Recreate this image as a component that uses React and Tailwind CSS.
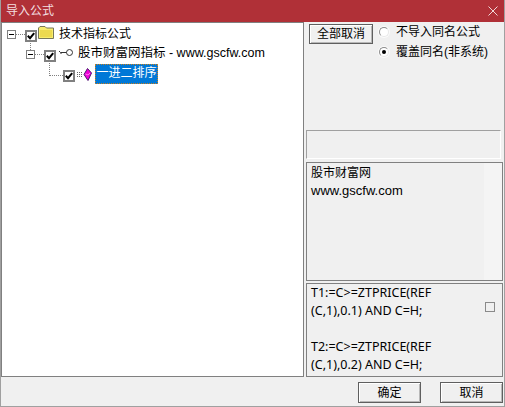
const cjk = "font-['Liberation_Sans','Noto_Sans_CJK_SC',sans-serif]"

const TreeBox = () => (
  <span className="flex w-[12px] h-[12px] mt-[6px] items-center justify-center border-2 border-[#808080] bg-white shrink-0">
    <svg width="8" height="8" viewBox="0 0 8 8">
      <path d="M0.8 3.8L3 6.2L7.2 1.2" fill="none" stroke="#000" strokeWidth="2" />
    </svg>
  </span>
)

const Minus = ({ children }) => (
  <span className="relative flex w-[9px] h-[9px] mt-[3px] items-center justify-center border border-[#808080] bg-white shrink-0">
    <span className="w-[5px] h-px bg-black" />
    {children}
  </span>
)

const Dots = () => <span className="w-[9px] h-0 mt-[3px] border-t border-dotted border-[#808080] shrink-0" />

const Folder = () => (
  <svg width="16" height="13" viewBox="0 0 16 13" className="ml-px mb-[2px] shrink-0">
    <path d="M0.5 12.5V2L2 0.5H7L8.5 2H15.5V12.5Z" fill="#f7ec6e" stroke="#77775a" />
    <path d="M2 4H14V11H2Z" fill="#ecd94f" />
  </svg>
)

const Key = () => (
  <svg width="15" height="9" viewBox="0 0 15 9" className="ml-[2px] mb-[2px] shrink-0">
    <circle cx="11.5" cy="4.5" r="3" fill="#fff" stroke="#333" />
    <path d="M8.5 4.5H2.5L1 3M3 4.5V6" stroke="#333" fill="none" />
  </svg>
)

const Gem = () => (
  <svg width="15" height="13" viewBox="0 0 15 13" className="ml-[2px] mt-[2px] shrink-0">
    <path d="M0 4.5H6M0 6.5H6M0 8.5H6" stroke="#666" strokeDasharray="1 1" />
    <path d="M10.5 0.5L14.5 5L11 12.5L7 6.5Z" fill="#f000d8" stroke="#4a1a70" />
    <path d="M8.5 6L11 7L13 5" fill="none" stroke="#ff80ee" />
  </svg>
)

const Radio = ({ on }) => (
  <span className="flex w-[10px] h-[10px] items-center justify-center rounded-full bg-white border border-[#8c8c8c] border-b-[#e8e8e8] border-r-[#e8e8e8] shadow-[0_0_0_1px_#fbfbfb] shrink-0">
    {on && <span className="w-[4px] h-[4px] rounded-full bg-black" />}
  </span>
)

const Btn = ({ children, className }) => (
  <button
    type="button"
    className={`flex items-center justify-center border border-[#5f5f5f] bg-[#f0f0f0] shadow-[inset_1px_1px_0_#fff,inset_-1px_-1px_0_#b8b8b8] text-[12px] text-black ${className}`}
  >
    {children}
  </button>
)

export default function App() {
  return (
    <div className={`w-[505px] h-[407px] flex flex-col bg-[#f0f0f0] border-x border-b border-[#a0a0a0] overflow-hidden ${cjk}`}>
      <div className="-mx-px h-[22px] flex items-center justify-between pl-[6px] pr-[7px] bg-[#b03037] text-[12px] text-[#f3dfe0] shrink-0">
        <span>导入公式</span>
        <svg width="10" height="10" viewBox="0 0 10 10"><path d="M0.5 0.5L9.5 9.5M9.5 0.5L0.5 9.5" stroke="#f0d8d8" /></svg>
      </div>
      <div className="flex gap-[2px] h-[355px] shrink-0">
        <div className="w-[303px] border border-[#808080] bg-white text-[12px] text-black shrink-0">
          <div className="flex items-center h-[20px] pl-[5px]">
            <Minus />
            <Dots />
            <TreeBox />
            <Folder />
            <span className="ml-[5px] mt-px">技术指标公式</span>
          </div>
          <div className="flex items-center h-[20px] pl-[24px]">
            <Minus>
              <span className="absolute left-[3px] -top-[8px] h-[7px] border-l border-dotted border-[#808080]" />
            </Minus>
            <Dots />
            <TreeBox />
            <Key />
            <span className="ml-[5px] text-[12.5px]">股市财富网指标 - www.gscfw.com</span>
          </div>
          <div className="flex items-center h-[20px] pl-[47px]">
            <span className="self-start w-[14px] h-[13px] border-l border-b border-dotted border-[#808080] shrink-0" />
            <TreeBox />
            <Gem />
            <span className="ml-[3px] mt-[2px] pb-[2px] w-[63px] h-[20px] flex items-center justify-center bg-[#0078d7] text-white border border-dotted border-[#c9801f]">一进二排序</span>
          </div>
        </div>
        <div className="flex-1 flex flex-col pr-px text-[12px] text-black min-w-0">
          <div className="flex h-[108px] shrink-0 pt-[2px] pl-[3px]">
            <Btn className="w-[64px] h-[20px]">全部取消</Btn>
            <div className="-mt-[2px] ml-[6px] flex flex-col">
              <div className="flex items-center h-[20px] gap-[7px]"><Radio /><span>不导入同名公式</span></div>
              <div className="flex items-center h-[20px] gap-[7px]"><Radio on /><span>覆盖同名(非系统)</span></div>
            </div>
          </div>
          <div className="h-[29px] mr-[2px] shrink-0 border border-[#a0a0a0] border-b-white border-r-white" />
          <div className="mt-[3px] h-[119px] shrink-0 border border-[#808080] flex">
            <div className="flex-1 pl-[4px] pt-px leading-[18px]">
              <div>股市财富网</div>
              <div className="text-[13px]">www.gscfw.com</div>
            </div>
            <div className="w-[18px] bg-[#f4f4f4]" />
          </div>
          <div className="mt-[2px] flex-1 border border-[#808080] flex pl-[4px] font-['Noto_Sans','Noto_Sans_CJK_SC',sans-serif] text-[12.5px] leading-[18px]">
            <div className="flex-1 min-w-0">
              <div>T1:=C&gt;=ZTPRICE(REF</div>
              <div>(C,1),0.1) AND C=H;</div>
              <div className="h-[18px]" />
              <div>T2:=C&gt;=ZTPRICE(REF</div>
              <div>(C,1),0.2) AND C=H;</div>
            </div>
            <span className="w-[10px] h-[10px] border border-[#8a8a8a] bg-[#f0f0f0] mt-[18px] mr-[7px] shrink-0" />
          </div>
        </div>
      </div>
      <div className="flex-1 flex items-start justify-end gap-[19px] pt-[5px] pr-px">
        <Btn className="w-[63px] h-[21px]">确定</Btn>
        <Btn className="w-[63px] h-[21px]">取消</Btn>
      </div>
    </div>
  )
}
